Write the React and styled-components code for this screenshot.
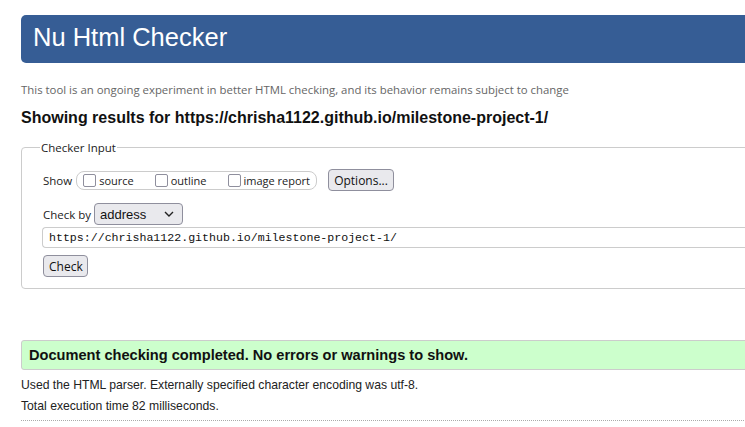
import React from "react";
import styled, { createGlobalStyle } from "styled-components";

const Global = createGlobalStyle`
  html, body { margin: 0; padding: 0; background: #fff; overflow: hidden; }
  body { font-family: "Liberation Sans", Arial, sans-serif; color: #222; }
`;

const Page = styled.div`
  width: 1000px;
  padding: 15px 0 0 21px;
  box-sizing: border-box;
`;

const Header = styled.header`
  height: 48px;
  background: #365d95;
  border-radius: 5px;
  display: flex;
  align-items: center;
  padding-left: 12px;
`;

const Title = styled.h1`
  margin: 0 0 3px;
  font-family: "Liberation Sans", Arial, sans-serif;
  font-weight: normal;
  font-size: 25.5px;
  color: #fff;
`;

const Intro = styled.p`
  margin: 19px 0 0;
  font-family: "Open Sans", sans-serif;
  font-size: 11.4px;
  line-height: 16px;
  color: #666;
`;

const Heading = styled.h2`
  margin: 10px 0 0;
  font-size: 16px;
  line-height: 20px;
  font-weight: bold;
  color: #111;
`;

const Field = styled.fieldset`
  margin: 12px 0 0;
  border: 1px solid #ccc;
  border-radius: 4px;
  padding: 14px 0 11px 21px;
  font-family: "Open Sans", sans-serif;
  font-size: 11.5px;
  color: #222;
`;

const Legend = styled.legend`
  padding: 0 1px;
  margin-left: -3px;
  font-size: 11.5px;
`;

const Row = styled.div`
  display: flex;
  align-items: center;
  margin-top: ${(p) => p.$top || 0}px;
`;

const Pill = styled.div`
  display: flex;
  align-items: center;
  height: 19px;
  box-sizing: border-box;
  border: 1px solid #ccc;
  border-radius: 8px;
  padding: 0 6px 0 6px;
  margin-left: 4px;
`;

const Check = styled.label`
  display: flex;
  align-items: center;
  gap: 3px;
  margin-right: ${(p) => p.$mr || 0}px;
  font-size: 11px;
`;

const Box = styled.span`
  width: 13px;
  height: 13px;
  box-sizing: border-box;
  border: 1.5px solid #8f8f9d;
  border-radius: 2px;
  background: #fff;
`;

const Button = styled.button`
  font-family: "Open Sans", sans-serif;
  font-size: 12px;
  height: 22px;
  padding: 0 5px;
  background: #e9e9ed;
  border: 1px solid #8f8f9d;
  border-radius: 4px;
  color: #111;
  width: ${(p) => p.$w}px;
  margin-left: ${(p) => p.$ml || 0}px;
`;

const Select = styled.div`
  width: 89px;
  height: 22px;
  box-sizing: border-box;
  border: 1px solid #8f8f9d;
  border-radius: 4px;
  background: #e9e9ed;
  display: flex;
  align-items: center;
  justify-content: space-between;
  padding: 0 8px 0 5px;
  margin-left: 3px;
  font-family: "Liberation Sans", Arial, sans-serif;
  font-size: 13px;
  color: #111;
`;

const UrlInput = styled.div`
  margin-top: 2px;
  margin-left: -1px;
  height: 21px;
  box-sizing: border-box;
  border: 1px solid #ccc;
  border-right: none;
  border-radius: 4px 0 0 4px;
  display: flex;
  align-items: center;
  padding-left: 6px;
  font-family: "Liberation Mono", monospace;
  font-size: 11.6px;
  color: #111;
`;

const Success = styled.div`
  margin-top: 51px;
  height: 30px;
  box-sizing: border-box;
  background: #ccffcc;
  border: 1px solid #ccc;
  border-radius: 3px;
  display: flex;
  align-items: center;
  padding-left: 7px;
  font-weight: bold;
  font-size: 14.6px;
  color: #111;
`;

const Note = styled.p`
  margin: ${(p) => p.$top || 0}px 0 0;
  font-size: 12.2px;
  line-height: 21px;
  color: #222;
`;

const Dotted = styled.hr`
  margin: 3px 0 0;
  border: none;
  border-top: 1px dotted #aaa;
`;

export default function App() {
  return (
    <>
      <Global />
      <Page>
        <Header>
          <Title>Nu Html Checker</Title>
        </Header>
        <Intro>
          This tool is an ongoing experiment in better HTML checking, and its behavior remains subject to change
        </Intro>
        <Heading>Showing results for https://chrisha1122.github.io/milestone-project-1/</Heading>
        <Field>
          <Legend>Checker Input</Legend>
          <Row>
            <span>Show</span>
            <Pill>
              <Check $mr={21}><Box />source</Check>
              <Check $mr={21}><Box />outline</Check>
              <Check><Box />image report</Check>
            </Pill>
            <Button $w={66} $ml={11}>Options...</Button>
          </Row>
          <Row $top={12}>
            <span>Check by</span>
            <Select>
              address
              <svg width="10" height="6" viewBox="0 0 10 6">
                <path d="M1 1l4 4 4-4" fill="none" stroke="#222" strokeWidth="1.4" />
              </svg>
            </Select>
          </Row>
          <UrlInput>https://chrisha1122.github.io/milestone-project-1/</UrlInput>
          <Row $top={7}>
            <Button $w={45}>Check</Button>
          </Row>
        </Field>
        <Success>Document checking completed. No errors or warnings to show.</Success>
        <Note $top={5}>Used the HTML parser. Externally specified character encoding was utf-8.</Note>
        <Note>Total execution time 82 milliseconds.</Note>
        <Dotted />
      </Page>
    </>
  );
}
